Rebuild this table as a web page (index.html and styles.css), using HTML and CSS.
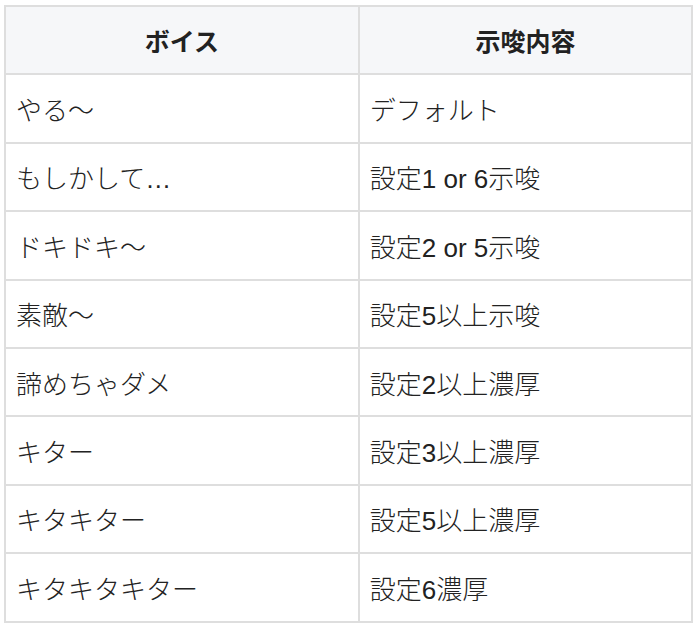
FILE: index.html
```html
<!DOCTYPE html>
<html lang="ja">
<head>
<meta charset="utf-8">
<link rel="stylesheet" href="styles.css">
</head>
<body>
<table class="voice-table">
  <thead>
    <tr><th>ボイス</th><th>示唆内容</th></tr>
  </thead>
  <tbody>
    <tr><td>やる〜</td><td>デフォルト</td></tr>
    <tr><td>もしかして…</td><td>設定1 or 6示唆</td></tr>
    <tr><td>ドキドキ〜</td><td>設定2 or 5示唆</td></tr>
    <tr><td>素敵〜</td><td>設定5以上示唆</td></tr>
    <tr><td>諦めちゃダメ</td><td>設定2以上濃厚</td></tr>
    <tr><td>キター</td><td>設定3以上濃厚</td></tr>
    <tr><td>キタキター</td><td>設定5以上濃厚</td></tr>
    <tr><td>キタキタキター</td><td>設定6濃厚</td></tr>
  </tbody>
</table>
</body>
</html>
```
FILE: styles.css
```css
html, body {
  margin: 0;
  padding: 0;
  background: #ffffff;
}
body {
  padding: 5px 7px 3px 4px;
  font-family: "Liberation Sans", "Noto Sans CJK JP", sans-serif;
  color: #222222;
}
.voice-table {
  width: 100%;
  border-collapse: collapse;
  table-layout: fixed;
  font-size: 26px;
}
.voice-table th,
.voice-table td {
  box-sizing: border-box;
  border: 2px solid #dedede;
  padding: 0 10px;
  height: 68.4px;
  vertical-align: middle;
  text-align: left;
  white-space: nowrap;
}
.voice-table td {
  font-weight: 300;
}
.voice-table th:first-child,
.voice-table td:first-child {
  width: 51.5%;
}
.voice-table th {
  background: #f6f7f9;
  text-align: center;
  font-weight: bold;
  font-size: 25px;
}
```
